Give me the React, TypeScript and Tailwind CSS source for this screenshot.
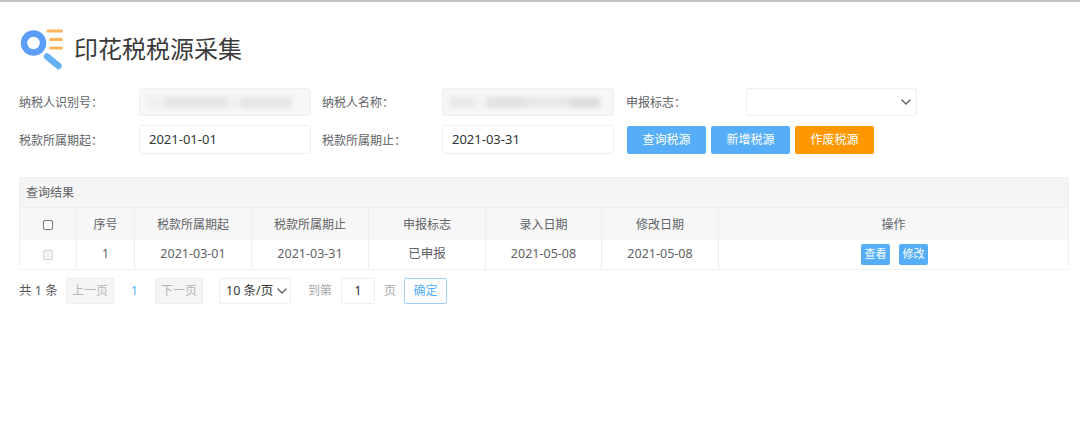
import React from "react";

const font = { fontFamily: '"Noto Sans", "Noto Sans CJK SC", sans-serif' };

function Logo() {
  return (
    <svg width="44" height="44" viewBox="0 0 44 44" fill="none">
      <path d="M29 4h13.5M31.5 12.5h11M31.5 21h11" stroke="#fdb45a" strokeWidth="3" strokeLinecap="round" />
      <circle cx="14.5" cy="16" r="9.5" stroke="#5b9ef8" strokeWidth="6.5" />
      <path d="M28 29.5 L39.5 39" stroke="#66b1f5" strokeWidth="6.5" strokeLinecap="round" />
    </svg>
  );
}

function Label({ children, w = "w-[120px]" }: { children: React.ReactNode; w?: string }) {
  return <div className={`${w} shrink-0 pt-[2px] text-[12px] text-[#606266]`}>{children}</div>;
}

function Redacted({ variant }: { variant: number }) {
  const bars =
    variant === 0
      ? ["w-[18px] bg-[#f0f0f0]", "w-[62px] bg-[#e4e4e4]", "w-[14px] bg-[#efefef]", "w-[50px] bg-[#e6e6e6]"]
      : ["w-[24px] bg-[#e8e8e8]", "w-[12px] bg-[#f2f2f2]", "w-[40px] bg-[#e2e2e2]", "w-[44px] bg-[#e8e8e8]", "w-[30px] bg-[#dedede]"];
  return (
    <div className="flex h-[28px] w-[172px] shrink-0 items-center rounded-[3px] border border-[#f0f0f0] bg-[#f7f7f7] pl-[7px]">
      <div className="flex h-[11px] items-center blur-[2px]">
        {bars.map((b, i) => (
          <div key={i} className={`h-full ${b}`} />
        ))}
      </div>
    </div>
  );
}

function DateInput({ value }: { value: string }) {
  return (
    <div className="flex h-[29px] w-[172px] shrink-0 items-center rounded-[3px] border border-[#eeeeee] bg-white pl-[9px] pt-[1px] text-[13px] text-[#333]">
      {value}
    </div>
  );
}

function Btn({ children, color }: { children: React.ReactNode; color: string }) {
  return (
    <div className={`flex h-[28px] w-[79px] items-center justify-center rounded-[2px] pt-[1px] text-[12px] text-white ${color}`}>
      {children}
    </div>
  );
}

function Chevron({ className = "" }: { className?: string }) {
  return (
    <svg width="10" height="6" viewBox="0 0 10 6" fill="none" className={className}>
      <path d="M1 1l4 4 4-4" stroke="#666" strokeWidth="1.5" strokeLinecap="round" strokeLinejoin="round" />
    </svg>
  );
}

const cols = ["w-[57px]", "w-[58px]", "w-[117px]", "w-[117px]", "w-[117px]", "w-[116px]", "w-[117px]", "flex-1"];
const heads = ["", "序号", "税款所属期起", "税款所属期止", "申报标志", "录入日期", "修改日期", "操作"];
const row = ["", "1", "2021-03-01", "2021-03-31", "已申报", "2021-05-08", "2021-05-08", ""];

export default function App() {
  return (
    <div className="h-[443px] w-[1080px] overflow-hidden bg-white" style={font}>
      <div className="h-[2px] bg-[#c4c4c4]" />
      <div className="flex h-[86px] items-start pl-[19px] pr-[11px]">
        <div className="mt-[24px] flex items-center">
          <Logo />
          <h1 className="ml-[11px] pt-[1px] text-[24px] leading-[44px] text-[#3a3a3a]">印花税税源采集</h1>
        </div>
      </div>
      <div className="flex flex-col gap-[9px] pl-[19px]">
        <div className="flex items-center">
          <Label>纳税人识别号：</Label>
          <Redacted variant={0} />
          <div className="w-[11px]" />
          <Label>纳税人名称：</Label>
          <Redacted variant={1} />
          <div className="w-[12px]" />
          <Label>申报标志：</Label>
          <div className="flex h-[28px] w-[171px] items-center justify-end rounded-[3px] border border-[#eeeeee] pr-[5px]">
            <Chevron />
          </div>
        </div>
        <div className="flex items-center">
          <Label>税款所属期起：</Label>
          <DateInput value="2021-01-01" />
          <div className="w-[11px]" />
          <Label>税款所属期止：</Label>
          <DateInput value="2021-03-31" />
          <div className="w-[13px]" />
          <div className="flex gap-[5px]">
            <Btn color="bg-[#55aef7]">查询税源</Btn>
            <Btn color="bg-[#55aef7]">新增税源</Btn>
            <Btn color="bg-[#ff9800]">作废税源</Btn>
          </div>
        </div>
      </div>

      <div className="ml-[19px] mt-[23px] w-[1050px] border border-[#f0f0f0] text-[12px] text-[#606266]">
        <div className="flex h-[30px] items-center border-b border-[#eeeeee] bg-[#f5f5f5] pl-[6px] pt-[1px]">查询结果</div>
        <div className="flex h-[32px] bg-[#f7f7f7]">
          {heads.map((h, i) => (
            <div key={i} className={`flex items-center justify-center border-r border-[#eeeeee] pt-[2px] last:border-r-0 ${cols[i]}`}>
              {i === 0 ? <div className="h-[10px] w-[10px] rounded-[2px] border border-[#777] bg-white" /> : h}
            </div>
          ))}
        </div>
        <div className="flex h-[29px] bg-white">
          {row.map((c, i) => (
            <div
              key={i}
              className={`flex items-center justify-center border-r border-[#eeeeee] text-[12.5px] last:border-r-0 ${cols[i]}`}
            >
              {i === 0 ? (
                <div className="h-[10px] w-[10px] rounded-[2px] border border-[#d4d4d4] bg-[#f4f4f4]" />
              ) : i === 7 ? (
                <div className="ml-[2px] flex gap-[9px]">
                  <div className="flex h-[21px] w-[29px] items-center justify-center rounded-[2px] bg-[#55aef7] text-[11px] text-white">查看</div>
                  <div className="flex h-[21px] w-[29px] items-center justify-center rounded-[2px] bg-[#55aef7] text-[11px] text-white">修改</div>
                </div>
              ) : (
                c
              )}
            </div>
          ))}
        </div>
      </div>

      <div className="ml-[19px] mt-[8px] flex h-[26px] items-center text-[12px]">
        <span className="w-[47px] text-[12.5px] text-[#555]">共 1 条</span>
        <div className="flex h-[26px] w-[48px] items-center justify-center rounded-[2px] border border-[#eeeeee] bg-[#f5f5f5] text-[#b5b5b5]">上一页</div>
        <span className="w-[41px] text-center text-[#55aef7]">1</span>
        <div className="flex h-[26px] w-[48px] items-center justify-center rounded-[2px] border border-[#eeeeee] bg-[#f5f5f5] text-[#b5b5b5]">下一页</div>
        <div className="ml-[16px] flex h-[26px] w-[72px] items-center justify-between rounded-[2px] border border-[#eeeeee] pl-[6px] pr-[3px] text-[12.5px] text-[#333]">
          10 条/页
          <Chevron />
        </div>
        <span className="ml-[17px] text-[#a8a8a8]">到第</span>
        <div className="ml-[9px] flex h-[26px] w-[34px] items-center justify-center rounded-[2px] border border-[#eeeeee] text-[13px] text-[#333]">1</div>
        <span className="ml-[9px] text-[#a8a8a8]">页</span>
        <div className="ml-[8px] flex h-[26px] w-[43px] items-center justify-center rounded-[2px] border border-[#9fd0fa] text-[#55aef7]">确定</div>
      </div>
    </div>
  );
}
